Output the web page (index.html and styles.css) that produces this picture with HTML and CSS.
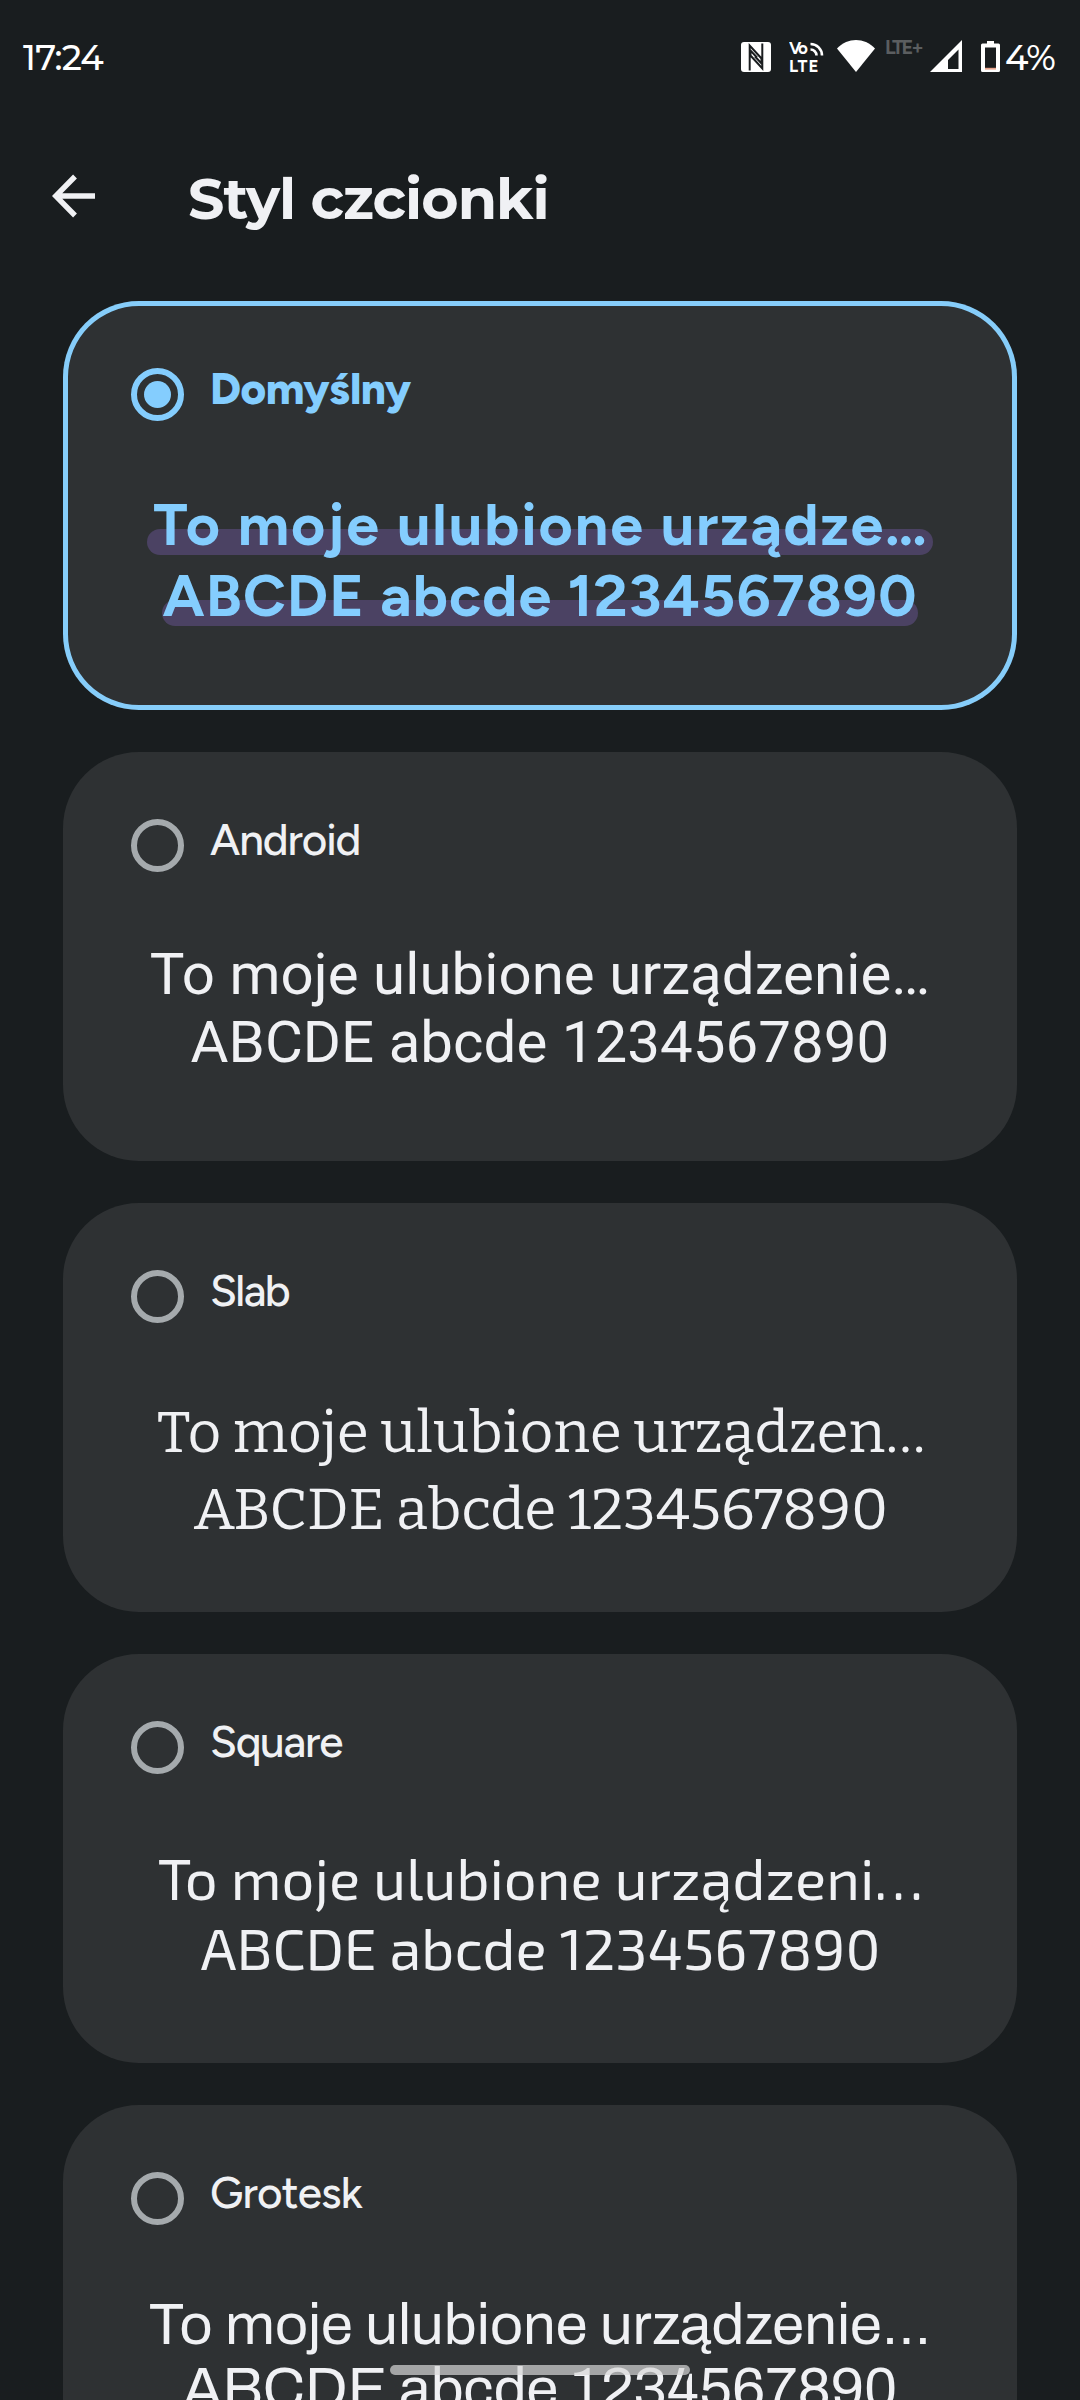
FILE: index.html
```html
<!DOCTYPE html>
<html lang="pl">
<head>
<meta charset="utf-8">
<title>Styl czcionki</title>
<link rel="stylesheet" href="styles.css">
</head>
<body>
<div class="screen">
  <div class="status">
    <div class="clock">17:24</div>
    <div class="status-icons">
      <svg class="nfc" width="30" height="40" viewBox="0 0 30 40">
        <rect x="0" y="6" width="30" height="30" rx="3" fill="#fff"/>
        <path d="M8.700 34.500V9.500L20.500 22.500V27.500L14 20.500M21.300 7.500V32.500L9.500 19.500V14.500L16 21.500" fill="none" stroke="#1a1d1f" stroke-width="2"/>
      </svg>
      <svg class="volte" width="38" height="40" viewBox="0 0 38 40">
        <text x="0" y="18" textLength="19" class="net-text">Vo</text>
        <text x="0" y="36" textLength="29.500" class="net-text">LTE</text>
        <path d="M21.500 8A11.500 11.500 0 0 1 33 19.500M21.500 13.500A6 6 0 0 1 27.500 19.500" fill="none" stroke="#fff" stroke-width="2.600"/>
      </svg>
      <svg class="wifi" width="40" height="40" viewBox="0 0 40 40">
        <path d="M20 36L1 12.500C12 1.300 28 1.300 39 12.500Z" fill="#fff"/>
      </svg>
      <svg class="lte" width="40" height="40" viewBox="0 0 40 40">
        <text x="0" y="18" textLength="39" class="net-text dim">LTE+</text>
      </svg>
      <svg class="signal" width="32" height="40" viewBox="0 0 32 40">
        <path d="M0 36L32 4V36ZM18 33H28.500V13.500L18 24Z" fill="#fff" fill-rule="evenodd"/>
      </svg>
      <svg class="battery" width="19" height="40" viewBox="0 0 19 40">
        <path d="M6 5H13V7.500H17.500Q19 7.500 19 9V34.500Q19 36 17.500 36H1.500Q0 36 0 34.500V9Q0 7.500 1.500 7.500H6ZM4 11.500V33H15V11.500Z" fill="#fff" fill-rule="evenodd"/>
        <rect x="4" y="31.800" width="11" height="1.800" fill="#e8a48d"/>
      </svg>
      <span class="percent">4%</span>
    </div>
  </div>

  <header class="appbar">
    <svg class="back" width="44" height="44" viewBox="0 0 44 44">
      <path d="M43 22H3M23 2.500L3.700 22L23 41.500" fill="none" stroke="#f0f1f4" stroke-width="5.400"/>
    </svg>
    <h1 class="title">Styl czcionki</h1>
  </header>

  <main class="list">
    <section class="card selected">
      <div class="option"><span class="radio"></span><span class="label l-default">Domyślny</span></div>
      <div class="preview p-default">
        <div><span class="mark mark-wide line-a">To moje ulubione urządze…</span></div>
        <div><span class="mark line-b">ABCDE abcde 1234567890</span></div>
      </div>
    </section>
    <section class="card">
      <div class="option"><span class="radio"></span><span class="label l-android">Android</span></div>
      <div class="preview p-android"><div>To moje ulubione urządzenie…</div><div>ABCDE abcde 1234567890</div></div>
    </section>
    <section class="card">
      <div class="option"><span class="radio"></span><span class="label l-slab">Slab</span></div>
      <div class="preview p-slab"><div>To moje ulubione urządzen…</div><div>ABCDE abcde 1234567890</div></div>
    </section>
    <section class="card">
      <div class="option"><span class="radio"></span><span class="label l-square">Square</span></div>
      <div class="preview p-square"><div>To moje ulubione urządzeni…</div><div>ABCDE abcde 1234567890</div></div>
    </section>
    <section class="card">
      <div class="option"><span class="radio"></span><span class="label l-grotesk">Grotesk</span></div>
      <div class="preview p-grotesk"><div class="line-a">To moje ulubione urządzenie…</div><div>ABCDE abcde 1234567890</div></div>
    </section>
  </main>
  <div class="home-bar"></div>
</div>
</body>
</html>
```
FILE: styles.css
```css
* { box-sizing: border-box; }
body {
  margin: 0;
  background: #191d1f;
  color: #f0f1f4;
  font-family: Montserrat, Inter, sans-serif;
}
.screen {
  position: relative;
  width: 1080px;
  height: 2400px;
  overflow: hidden;
  background: #191d1f;
}

/* Status bar */
.status {
  display: flex;
  height: 112px;
  padding: 36px 0 0 23px;
  color: #fff;
}
.clock {
  width: 718px;
  font-size: 35px;
  font-weight: 500;
  line-height: 43px;
  letter-spacing: -0.8px;
}
.status-icons { display: flex; height: 40px; }
.volte { margin-left: 18px; }
.wifi { margin-left: 9px; }
.lte { margin-left: 9px; }
.signal { margin-left: 5px; }
.battery { margin-left: 19px; }
.percent {
  margin-left: 5px;
  font-size: 35px;
  font-weight: 500;
  line-height: 43px;
  letter-spacing: -1px;
}
.net-text {
  font: 700 17px Figtree, Roboto, sans-serif;
  fill: #fff;
}
.net-text.dim { font-size: 20px; fill: #5b5e60; }

/* App bar */
.appbar {
  display: flex;
  height: 189px;
  padding: 62px 0 0 52px;
}
.title {
  margin: -10px 0 0 92px;
  font-size: 57px;
  font-weight: 700;
  line-height: 70px;
  letter-spacing: -0.95px;
}

/* Option cards */
.list {
  display: flex;
  flex-direction: column;
  gap: 42px;
  padding: 0 63px;
}
.card {
  height: 409px;
  flex: none;
  padding: 61px 68px 0;
  border-radius: 76px;
  background: #2e3133;
}
.card.selected {
  color: #84cdfe;
  box-shadow: inset 0 0 0 5px #86cdfa;
}
.option {
  display: flex;
  gap: 26px;
  height: 127px;
}
.radio {
  display: flex;
  width: 53px;
  height: 53px;
  margin-top: 6px;
  border: 6px solid #a5aaad;
  border-radius: 50%;
}
.selected .radio { border-color: #84cdfe; }
.selected .radio::before {
  content: "";
  width: 27px;
  height: 27px;
  margin: auto;
  border-radius: 50%;
  background: #84cdfe;
}
.label {
  font-family: Figtree, Inter, sans-serif;
  font-size: 44px;
  font-weight: 500;
  line-height: 54px;
}
.l-default { font-weight: 800; letter-spacing: -0.5px; }
.l-android { letter-spacing: -1.1px; }
.l-slab { letter-spacing: -1.6px; }
.l-square { letter-spacing: -1.2px; }
.l-grotesk { letter-spacing: -0.8px; }

.preview {
  margin: 0 -60px;
  font-size: 58px;
  text-align: center;
  white-space: nowrap;
}
.p-default {
  font-family: Figtree, Inter, sans-serif;
  font-size: 59px;
  font-weight: 700;
  line-height: 71px;
}
.p-default .line-a { letter-spacing: 1.9px; }
.p-default .line-b { letter-spacing: 1.1px; }
.mark {
  display: inline-block;
  position: relative;
  isolation: isolate;
}
.mark::before {
  content: "";
  position: absolute;
  z-index: -1;
  top: 40px;
  left: 0;
  right: 0;
  height: 26px;
  border-radius: 13px;
  background: #4b4263;
}
.mark-wide { padding: 0 4px 0 6px; }
.p-android { font-family: Roboto, sans-serif; font-size: 58.2px; line-height: 68px; letter-spacing: 0.05px; }
.p-slab { padding: 3px 0 0 2px; font-family: Bitter, "DejaVu Serif Condensed", serif; font-weight: 440; line-height: 77px; }
.p-square { padding-left: 1px; font-family: "Exo 2", "Open Sans", sans-serif; line-height: 70px; }
.p-grotesk { font-family: Archivo, "Liberation Sans", sans-serif; line-height: 64px; }
.p-grotesk .line-a { letter-spacing: 0.1px; }

/* Gesture handle */
.home-bar {
  position: absolute;
  left: 390px;
  bottom: 25px;
  width: 300px;
  height: 10px;
  border-radius: 5px;
  background: rgba(215, 215, 215, 0.7);
}
```
